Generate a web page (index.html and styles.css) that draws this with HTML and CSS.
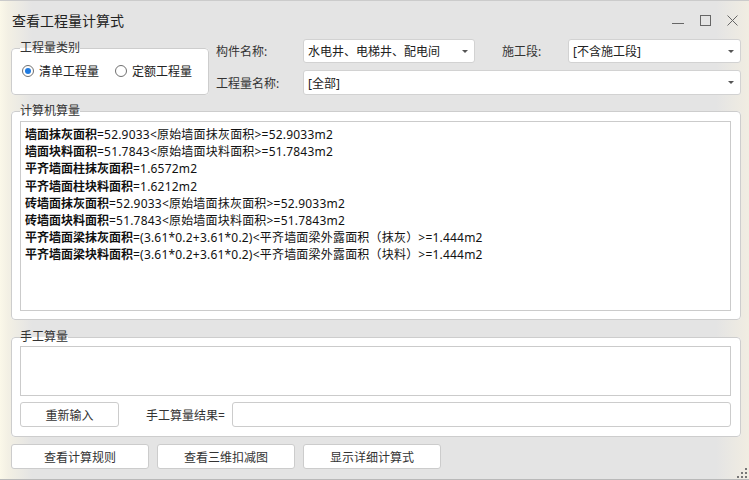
FILE: index.html
```html
<!DOCTYPE html>
<html lang="zh-CN">
<head>
    <meta charset="UTF-8">
    <title>查看工程量计算式</title>
    <link rel="stylesheet" href="styles.css">
</head>
<body>

    <div class="window">
        <!-- Title Bar -->
        <div class="titlebar">
            <span class="title">查看工程量计算式</span>
            <div class="win-ctrls">
                <svg width="12" height="11" viewBox="0 0 12 11"><line x1="0" y1="8.5" x2="12" y2="8.5" stroke="#666" stroke-width="1"/></svg>
                <svg width="11" height="11" viewBox="0 0 11 11"><rect x="0.5" y="0.5" width="10" height="10" fill="none" stroke="#666" stroke-width="1"/></svg>
                <svg width="11" height="11" viewBox="0 0 11 11"><path d="M0.5 0.5 L10.5 10.5 M10.5 0.5 L0.5 10.5" stroke="#666" stroke-width="1"/></svg>
            </div>
        </div>

        <div class="content">
            <!-- Top Row: type + filters -->
            <div class="top-row">
                <fieldset class="group type-group">
                    <legend>工程量类别</legend>
                    <div class="radio-row">
                        <label class="radio-item"><span class="radio checked"></span>清单工程量</label>
                        <label class="radio-item"><span class="radio"></span>定额工程量</label>
                    </div>
                </fieldset>

                <div class="filters">
                    <span class="lbl">构件名称:</span>
                    <div class="combo"><span>水电井、电梯井、配电间</span><span class="arrow"></span></div>
                    <span class="lbl lbl-stage">施工段:</span>
                    <div class="combo"><span>[不含施工段]</span><span class="arrow"></span></div>
                    <span class="lbl">工程量名称:</span>
                    <div class="combo combo-wide"><span>[全部]</span><span class="arrow"></span></div>
                </div>
            </div>

            <!-- Computer Calculation -->
            <fieldset class="group calc-group">
                <legend>计算机算量</legend>
                <div class="calc-box">
                    <div class="line"><b>墙面抹灰面积</b>=52.9033&lt;原始墙面抹灰面积&gt;=52.9033m2</div>
                    <div class="line"><b>墙面块料面积</b>=51.7843&lt;原始墙面块料面积&gt;=51.7843m2</div>
                    <div class="line"><b>平齐墙面柱抹灰面积</b>=1.6572m2</div>
                    <div class="line"><b>平齐墙面柱块料面积</b>=1.6212m2</div>
                    <div class="line"><b>砖墙面抹灰面积</b>=52.9033&lt;原始墙面抹灰面积&gt;=52.9033m2</div>
                    <div class="line"><b>砖墙面块料面积</b>=51.7843&lt;原始墙面块料面积&gt;=51.7843m2</div>
                    <div class="line"><b>平齐墙面梁抹灰面积</b>=(3.61*0.2+3.61*0.2)&lt;平齐墙面梁外露面积（抹灰）&gt;=1.444m2</div>
                    <div class="line"><b>平齐墙面梁块料面积</b>=(3.61*0.2+3.61*0.2)&lt;平齐墙面梁外露面积（块料）&gt;=1.444m2</div>
                </div>
            </fieldset>

            <!-- Manual Calculation -->
            <fieldset class="group manual-group">
                <legend>手工算量</legend>
                <div class="manual-box"></div>
                <div class="manual-row">
                    <button class="btn btn-reset">重新输入</button>
                    <span class="lbl result-lbl">手工算量结果=</span>
                    <div class="result-input"></div>
                </div>
            </fieldset>

            <!-- Bottom Buttons -->
            <div class="bottom-row">
                <button class="btn btn-wide">查看计算规则</button>
                <button class="btn btn-wide">查看三维扣减图</button>
                <button class="btn btn-wide">显示详细计算式</button>
            </div>
        </div>

        <svg class="grip" width="10" height="10" viewBox="0 0 10 10">
            <rect x="8" y="0" width="2" height="2" fill="#777"/>
            <rect x="4" y="4" width="2" height="2" fill="#777"/>
            <rect x="8" y="4" width="2" height="2" fill="#777"/>
            <rect x="0" y="8" width="2" height="2" fill="#777"/>
            <rect x="4" y="8" width="2" height="2" fill="#777"/>
            <rect x="8" y="8" width="2" height="2" fill="#777"/>
        </svg>
    </div>

</body>
</html>
```

FILE: styles.css
```css
/* Page */
* {
    box-sizing: border-box;
}

body {
    margin: 0;
    font-family: "Noto Sans", "Noto Sans CJK SC", sans-serif;
    font-size: 12px;
    color: #222;
}

/* Window frame */
.window {
    position: relative;
    width: 749px;
    height: 480px;
    border-top: 1px solid #cbcbcb;
    border-bottom: 1px solid #b9b9b9;
    background: linear-gradient(to right, #fbf8e9 0, #f3f0e4 8px, #e4e4e4 32px, #e4e4e4 716px, #f1ede2 749px);
}

/* Title Bar */
.titlebar {
    height: 38px;
    display: flex;
    align-items: center;
    justify-content: space-between;
    padding-left: 12px;
}

.title {
    font-size: 14px;
    color: #222;
}

.win-ctrls {
    display: flex;
    align-items: center;
    gap: 16px;
    margin-right: 11px;
}

.win-ctrls svg {
    display: block;
}

/* Content */
.content {
    padding: 0 8px 0 11px;
}

.group {
    margin: 0;
    border: 1px solid #cdcdcd;
    border-radius: 4px;
    background: #fff;
    min-width: 0;
}

.group legend {
    padding: 0;
    font-size: 12px;
    line-height: 16px;
    color: #333;
}

/* Top Row */
.top-row {
    display: flex;
    align-items: flex-start;
    gap: 7px;
}

.type-group {
    width: 198px;
    margin-top: 1px;
    padding: 7px 8px 15px 8px;
}

.radio-row {
    display: flex;
    align-items: center;
    gap: 16px;
    padding-left: 2px;
    height: 16px;
}

.radio-item {
    display: flex;
    align-items: center;
    gap: 5px;
    color: #222;
}

.radio {
    width: 12px;
    height: 12px;
    border: 1px solid #707070;
    border-radius: 50%;
    display: flex;
    align-items: center;
    justify-content: center;
    background: #fff;
}

.radio.checked::after {
    content: "";
    width: 6px;
    height: 6px;
    border-radius: 50%;
    background: #1f7ae0;
}

.filters {
    flex: 1;
    display: grid;
    grid-template-columns: 87px 172px 93px 1fr;
    grid-template-rows: 24px 25px;
    row-gap: 7px;
    align-items: center;
}

.lbl {
    color: #333;
    font-size: 12px;
}

.lbl-stage {
    padding-left: 27px;
}

.combo {
    height: 100%;
    display: flex;
    align-items: center;
    justify-content: space-between;
    background: #fff;
    border: 1px solid #d2d2d2;
    border-radius: 3px;
    padding: 0 6px 0 4px;
    color: #222;
}

.combo-wide {
    grid-column: 2 / 5;
}

.arrow {
    width: 0;
    height: 0;
    border-left: 3px solid transparent;
    border-right: 3px solid transparent;
    border-top: 3px solid #555;
}

/* Computer Calculation */
.calc-group {
    margin-top: 8px;
    padding: 2px 9px 8px 8px;
}

.calc-box {
    height: 190px;
    border: 1px solid #cbcbcb;
    padding: 4px 4px;
    background: #fff;
}

.line {
    line-height: 17.2px;
    color: #111;
    white-space: nowrap;
    letter-spacing: 0.2px;
}

.line b {
    font-weight: bold;
    letter-spacing: 0;
}

/* Manual Calculation */
.manual-group {
    margin-top: 9px;
    padding: 1px 9px 9px 8px;
}

.manual-box {
    height: 50px;
    border: 1px solid #cbcbcb;
    background: #fff;
}

.manual-row {
    display: flex;
    align-items: center;
    margin-top: 6px;
    height: 25px;
}

.btn {
    height: 25px;
    background: #fff;
    border: 1px solid #cccccc;
    border-radius: 3px;
    font-family: inherit;
    font-size: 12px;
    color: #333;
    padding: 0;
}

.btn-reset {
    width: 99px;
}

.result-lbl {
    margin-left: 27px;
    margin-right: 7px;
}

.result-input {
    flex: 1;
    height: 25px;
    background: #fff;
    border: 1px solid #cccccc;
    border-radius: 3px;
}

/* Bottom Buttons */
.bottom-row {
    display: flex;
    gap: 8px;
    margin-top: 7px;
}

.btn-wide {
    width: 138px;
}

.grip {
    position: absolute;
    right: 2px;
    bottom: 1px;
}
```
